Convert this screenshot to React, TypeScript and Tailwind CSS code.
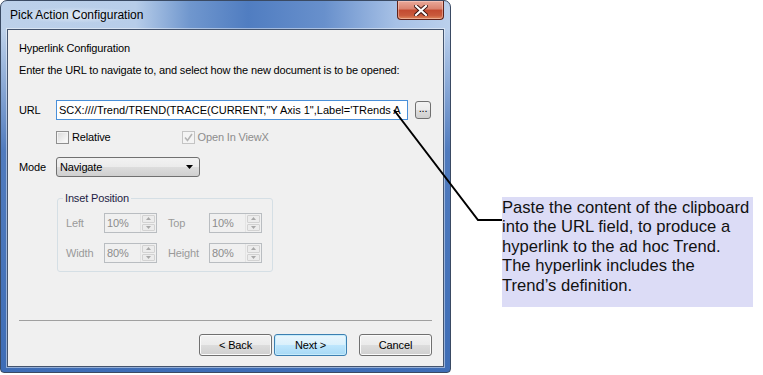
import React from 'react'

const ui = "font-['Liberation_Sans',Arial,sans-serif] text-[11px] leading-[13px] tracking-[-0.15px]"

const Spin = ({ value }: { value: string }) => (
  <div className="flex h-[20px] w-[53px] border border-[#b9bdc1] bg-[#f0f0f0]">
    <div className="flex flex-1 items-center pl-[2px] text-[#8c8c8c]">{value}</div>
    <div className="flex w-[16px] flex-col gap-px border-l border-[#e4e4e4] p-px">
      <div className="flex flex-1 items-center justify-center rounded-[1px] border border-[#d2d2d2] bg-[#ececec]">
        <svg width="5" height="3" viewBox="0 0 5 3">
          <path d="M0 3 L2.5 0 L5 3 Z" fill="#a8a8a8" />
        </svg>
      </div>
      <div className="flex flex-1 items-center justify-center rounded-[1px] border border-[#d2d2d2] bg-[#ececec]">
        <svg width="5" height="3" viewBox="0 0 5 3">
          <path d="M0 0 L2.5 3 L5 0 Z" fill="#a8a8a8" />
        </svg>
      </div>
    </div>
  </div>
)

const Btn = ({ label, primary }: { label: string; primary?: boolean }) => (
  <button
    className={
      primary
        ? 'flex h-[22px] w-[73px] items-center justify-center rounded-[3px] border border-[#3c7fb1] bg-[linear-gradient(180deg,#eaf6fd_0%,#d9f0fc_50%,#bee6fd_50%,#a7d9f5_100%)] shadow-[inset_0_0_0_1px_#c6ecfc]'
        : 'flex h-[22px] w-[73px] items-center justify-center rounded-[3px] border border-[#707070] bg-[linear-gradient(180deg,#f2f2f2_0%,#ebebeb_50%,#dddddd_50%,#cfcfcf_100%)] shadow-[inset_0_0_0_1px_#fbfbfb]'
    }
  >
    {label}
  </button>
)

const App = () => {
  return (
    <div className="relative flex h-[375px] w-[763px] items-start bg-white">
      <div className="flex h-[373px] w-[451px] flex-col rounded-t-[7px] rounded-b-[4px] border border-[#3a4a63] bg-[linear-gradient(180deg,rgba(61,108,182,0)_0px,rgba(61,108,182,0)_30px,rgba(61,108,182,0.85)_150px,#3e6db6_100%),linear-gradient(90deg,#bdd1ea_0%,#b7cde9_30%,#7097ce_42%,#507dc1_55%,#6890cc_72%,#a7c1e6_88%,#bbd0ec_100%)]">
        <div className="flex h-[28px] items-start">
          <div className="mt-[6px] ml-[7px] rounded-full bg-[radial-gradient(closest-side,rgba(255,255,255,0.55),rgba(255,255,255,0))] px-[2px] font-['Liberation_Sans',Arial,sans-serif] text-[12px] leading-[16px] text-black">
            Pick Action Configuration
          </div>
          <div className="mr-[6px] ml-auto flex h-[19px] w-[47px] items-center justify-center rounded-b-[4px] border border-t-0 border-[#5f2219] bg-[linear-gradient(180deg,#e9a99a_0%,#d9826e_45%,#c34a30_50%,#c95a3c_80%,#e08a5e_100%)] shadow-[inset_0_0_0_1px_rgba(255,220,210,0.45)]">
            <svg width="14" height="11" viewBox="0 0 14 11">
              <path d="M2 1 L12 10 M12 1 L2 10" stroke="#3a1410" strokeWidth="4" strokeLinecap="square" />
              <path d="M2 1 L12 10 M12 1 L2 10" stroke="#ffffff" strokeWidth="2.2" strokeLinecap="square" />
            </svg>
          </div>
        </div>

        <div className={`mx-[6px] mb-[5px] flex flex-1 flex-col border border-[#44546e] bg-[#f0f0f0] px-[11px] text-black shadow-[0_0_0_1px_rgba(255,255,255,0.45)] ${ui}`}>
          <div className="mt-[12px]">Hyperlink Configuration</div>
          <div className="mt-[9px]">Enter the URL to navigate to, and select how the new document is to be opened:</div>

          <div className="mt-[23px] flex h-[20px] items-center">
            <div className="w-[37px]">URL</div>
            <div className="flex h-[20px] w-[352px] items-center overflow-hidden border border-[#4a90d9] bg-white pl-[2px] tracking-normal whitespace-nowrap">
              SCX:////Trend/TREND(TRACE(CURRENT,"Y Axis 1",Label='TRends A
            </div>
            <div className="ml-[7px] flex h-[18px] w-[16px] items-center justify-center rounded-[3px] border border-[#707070] bg-[linear-gradient(180deg,#f2f2f2_0%,#ebebeb_50%,#dddddd_50%,#cfcfcf_100%)] pb-[3px] leading-none">
              ...
            </div>
          </div>

          <div className="mt-[11px] flex h-[13px] items-center pl-[37px]">
            <div className="h-[13px] w-[13px] border border-[#8f8f8f] bg-[linear-gradient(135deg,#d8d8d8,#ffffff)] shadow-[inset_0_0_0_1px_#f4f4f4]" />
            <div className="ml-[3px]">Relative</div>
            <div className="ml-[71px] flex h-[13px] w-[13px] items-center justify-center border border-[#c4c4c4] bg-[#f4f4f4]">
              <svg width="9" height="9" viewBox="0 0 9 9">
                <path d="M1 4.5 L3.5 7.5 L8 1" stroke="#b4b4b4" strokeWidth="1.6" fill="none" />
              </svg>
            </div>
            <div className="ml-[3px] text-[#8d8d8d]">Open In ViewX</div>
          </div>

          <div className="mt-[13px] flex h-[20px] items-center">
            <div className="w-[37px]">Mode</div>
            <div className="flex h-[20px] w-[144px] items-center justify-between rounded-[3px] border border-[#707070] bg-[linear-gradient(180deg,#f2f2f2_0%,#ebebeb_50%,#dddddd_50%,#cfcfcf_100%)] pr-[6px] pl-[3px]">
              <span>Navigate</span>
              <svg width="7" height="4" viewBox="0 0 7 4">
                <path d="M0 0 L7 0 L3.5 4 Z" fill="#000" />
              </svg>
            </div>
          </div>

          <fieldset className="mt-[15px] ml-[38px] w-[216px] rounded-[3px] border border-[#d5dfe5] pr-[9px] pb-[8px] pl-[8px]">
            <legend className="ml-[-3px] px-[2px] text-[#1c1c44]">Inset Position</legend>
            <div className="mt-[8px] flex h-[20px] items-center text-[#9a9a9a]">
              <div className="w-[38px]">Left</div>
              <Spin value="10%" />
              <div className="ml-[11px] w-[41px]">Top</div>
              <Spin value="10%" />
            </div>
            <div className="mt-[10px] flex h-[20px] items-center text-[#9a9a9a]">
              <div className="w-[38px]">Width</div>
              <Spin value="80%" />
              <div className="ml-[11px] w-[41px]">Height</div>
              <Spin value="80%" />
            </div>
          </fieldset>

          <div className="mt-[48px] h-px bg-[#a0a0a0]" />

          <div className="mt-[13px] flex justify-end">
            <Btn label="< Back" />
            <div className="ml-[2px]">
              <Btn label="Next >" primary />
            </div>
            <div className="ml-[12px]">
              <Btn label="Cancel" />
            </div>
          </div>
        </div>
      </div>

      <div className="mt-[197px] ml-[51px] h-[110px] w-[251px] bg-[#dcdcf6] pt-[1px] font-['Liberation_Sans',Arial,sans-serif] text-[16.6px] leading-[19.4px] text-[#111]">
        Paste the content of the clipboard
        <br />
        into the URL field, to produce a
        <br />
        hyperlink to the ad hoc Trend.
        <br />
        The hyperlink includes the
        <br />
        Trend’s definition.
      </div>

      <svg className="pointer-events-none absolute top-0 left-0" width="763" height="375">
        <polyline points="394,110 478,220 502,220" fill="none" stroke="#000" strokeWidth="2" />
      </svg>
    </div>
  )
}

export default App
